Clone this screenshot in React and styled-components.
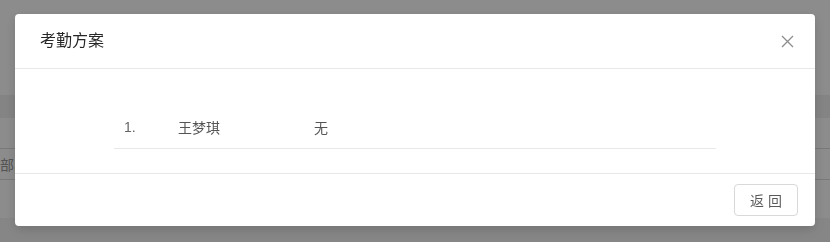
import React from "react";
import styled, { createGlobalStyle } from "styled-components";

const GlobalStyle = createGlobalStyle`
  html, body {
    margin: 0;
    padding: 0;
    background: #fff;
    font-family: "Liberation Sans", "Noto Sans CJK SC", sans-serif;
  }
`;

const Page = styled.div`
  width: 830px;
  height: 242px;
  overflow: hidden;
  display: flex;
  flex-direction: column;
`;

const Band = styled.div`
  height: ${(p) => p.h}px;
  background: ${(p) => p.bg || "#fff"};
  flex-shrink: 0;
`;

const FilterBox = styled.div`
  height: 30px;
  border-top: 1px solid #dcdcdc;
  border-bottom: 1px solid #dcdcdc;
  display: flex;
  align-items: center;
  font-size: 14px;
  color: #999;
`;

const Mask = styled.div`
  position: fixed;
  inset: 0;
  background: rgba(0, 0, 0, 0.45);
`;

const Modal = styled.div`
  position: fixed;
  top: 14px;
  left: 15px;
  width: 800px;
  background: #fff;
  border-radius: 4px;
  box-shadow: 0 4px 12px rgba(0, 0, 0, 0.15);
  display: flex;
  flex-direction: column;
`;

const Header = styled.div`
  height: 55px;
  box-sizing: border-box;
  padding: 0 24px 0 25px;
  display: flex;
  align-items: center;
  justify-content: space-between;
  border-bottom: 1px solid #e8e8e8;
`;

const Title = styled.div`
  font-size: 16px;
  line-height: 22px;
  color: rgba(0, 0, 0, 0.85);
`;

const Close = styled.button`
  width: 56px;
  height: 54px;
  margin-right: -24px;
  border: none;
  background: none;
  padding: 0;
  display: flex;
  align-items: center;
  justify-content: center;
  color: rgba(0, 0, 0, 0.45);
  cursor: pointer;
`;

const Body = styled.div`
  padding: 37px 0 24px;
  display: flex;
  justify-content: center;
  border-bottom: 1px solid #e8e8e8;
`;

const Row = styled.div`
  width: 602px;
  height: 43px;
  box-sizing: border-box;
  display: grid;
  grid-template-columns: 64px 136px 1fr;
  align-items: center;
  border-bottom: 1px solid #e8e8e8;
  font-size: 14px;
  color: #555;
`;

const Index = styled.span`
  padding-left: 10px;
  color: #666;
`;

const Footer = styled.div`
  padding: 10px 17px 10px 16px;
  display: flex;
  justify-content: flex-end;
`;

const Button = styled.button`
  height: 32px;
  padding: 0 15px;
  border: 1px solid #d9d9d9;
  border-radius: 4px;
  background: #fff;
  font-family: inherit;
  font-size: 14px;
  color: rgba(0, 0, 0, 0.65);
  cursor: pointer;
`;

const App = () => {
  return (
    <>
      <GlobalStyle />
      <Page>
        <Band h={95} />
        <Band h={23} bg="#f0f0f0" />
        <Band h={30} />
        <FilterBox>部门</FilterBox>
        <Band h={38} />
        <Band h={24} bg="#f5f5f5" />
      </Page>
      <Mask />
      <Modal>
        <Header>
          <Title>考勤方案</Title>
          <Close aria-label="close">
            <svg width="13" height="13" viewBox="0 0 13 13">
              <path
                d="M1 1 L12 12 M12 1 L1 12"
                stroke="currentColor"
                strokeWidth="1.3"
                fill="none"
              />
            </svg>
          </Close>
        </Header>
        <Body>
          <Row>
            <Index>1.</Index>
            <span>王梦琪</span>
            <span>无</span>
          </Row>
        </Body>
        <Footer>
          <Button>返 回</Button>
        </Footer>
      </Modal>
    </>
  );
};

export default App;
